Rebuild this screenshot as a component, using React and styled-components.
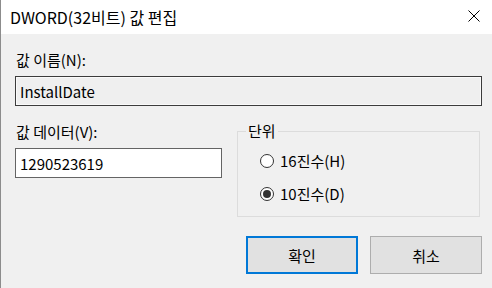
import React, { useState } from 'react';
import styled, { createGlobalStyle } from 'styled-components';

const GlobalStyle = createGlobalStyle`
  html, body {
    margin: 0;
    padding: 0;
    background: #f0f0f0;
  }
  * {
    box-sizing: border-box;
  }
`;

const RADIO_LIST = [
  { id: 'hex', label: '16진수(H)' },
  { id: 'dec', label: '10진수(D)' },
];

function App() {
  const [base, setBase] = useState('dec');

  return (
    <Window>
      <GlobalStyle />
      <TitleBar>
        <Title>DWORD(32비트) 값 편집</Title>
        <CloseButton aria-label="닫기">
          <svg width="12" height="12" viewBox="0 0 12 12">
            <path d="M0.5 0.5 L11.5 11.5 M11.5 0.5 L0.5 11.5" stroke="#000" strokeWidth="1" fill="none" />
          </svg>
        </CloseButton>
      </TitleBar>
      <Body>
        <Label>값 이름(N):</Label>
        <NameField>InstallDate</NameField>
        <DataRow>
          <DataColumn>
            <Label>값 데이터(V):</Label>
            <DataInput defaultValue="1290523619" />
          </DataColumn>
          <GroupBox>
            <Legend>단위</Legend>
            <RadioList>
              {RADIO_LIST.map(({ id, label }) => (
                <RadioRow key={id} onClick={() => setBase(id)}>
                  <RadioCircle checked={base === id} />
                  <RadioText>{label}</RadioText>
                </RadioRow>
              ))}
            </RadioList>
          </GroupBox>
        </DataRow>
        <ButtonRow>
          <DialogButton primary>확인</DialogButton>
          <DialogButton>취소</DialogButton>
        </ButtonRow>
      </Body>
    </Window>
  );
}

const Window = styled.div`
  width: 492px;
  height: 288px;
  background: #f0f0f0;
  border-left: 1px solid #8c8c8c;
  font-family: 'Noto Sans CJK KR', 'Noto Sans', sans-serif;
  color: #000;
  overflow: hidden;
`;

const TitleBar = styled.div`
  display: flex;
  align-items: center;
  justify-content: space-between;
  height: 34px;
  padding: 0 12px 0 10px;
  margin-left: -1px;
  background: #fff;
`;

const Title = styled.div`
  font-size: 16px;
  line-height: 20px;
  margin-top: -1px;
`;

const CloseButton = styled.div`
  display: flex;
  width: 12px;
  height: 12px;
  margin-top: -2px;
`;

const Body = styled.div`
  padding: 16px 10px 0 14px;
`;

const Label = styled.div`
  font-size: 15px;
  line-height: 20px;
  padding-left: 1px;
  margin-bottom: 6px;
`;

const NameField = styled.div`
  display: flex;
  align-items: center;
  width: 467px;
  height: 30px;
  padding-left: 4px;
  border: 1px solid #3c3c3c;
  box-shadow: inset 0 0 0 1px #fafafa;
  background: #efefef;
  font-size: 15px;
`;

const DataRow = styled.div`
  display: flex;
  gap: 15px;
  margin-top: 16px;
`;

const DataColumn = styled.div`
  display: flex;
  flex-direction: column;
  width: 207px;
`;

const DataInput = styled.input`
  width: 207px;
  height: 30px;
  padding: 0 4px;
  border: 1px solid #646464;
  background: #fff;
  font-family: inherit;
  font-size: 15px;
  color: #000;
  outline: none;
`;

const GroupBox = styled.fieldset`
  width: 243px;
  margin: 0;
  padding: 0 0 12px 22px;
  border: 1px solid #dcdcdc;
`;

const Legend = styled.legend`
  margin-left: -14px;
  padding: 0 2px;
  font-size: 15px;
  line-height: 18px;
`;

const RadioList = styled.div`
  display: flex;
  flex-direction: column;
  gap: 13px;
  margin-top: 11px;
`;

const RadioRow = styled.div`
  display: flex;
  align-items: center;
  gap: 6px;
  height: 20px;
  cursor: default;
`;

const RadioCircle = styled.span`
  position: relative;
  width: 14px;
  height: 14px;
  border: 1px solid #333;
  border-radius: 50%;
  background: #fff;

  &::after {
    content: '';
    display: ${({ checked }) => (checked ? 'block' : 'none')};
    position: absolute;
    left: 2px;
    top: 2px;
    width: 8px;
    height: 8px;
    border-radius: 50%;
    background: #333;
  }
`;

const RadioText = styled.span`
  font-size: 15px;
  line-height: 20px;
`;

const ButtonRow = styled.div`
  display: flex;
  justify-content: flex-end;
  gap: 12px;
  margin-top: 19px;
`;

const DialogButton = styled.div`
  display: flex;
  align-items: center;
  justify-content: center;
  width: 112px;
  height: 38px;
  background: #e1e1e1;
  border: ${({ primary }) => (primary ? '2px solid #0078d7' : '1px solid #adadad')};
  font-size: 15px;
`;

export default App;
